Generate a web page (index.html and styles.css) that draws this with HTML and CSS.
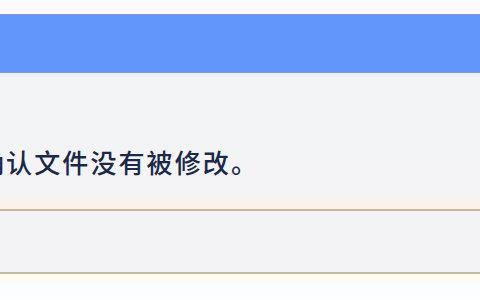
FILE: index.html
```html
<!DOCTYPE html>
<html lang="zh">
<head>
<meta charset="utf-8">
<link rel="stylesheet" href="styles.css">
</head>
<body>
<div class="page">
  <div class="top"></div>
  <div class="bar"></div>
  <div class="content">
    <p class="msg">确认文件没有被修改。</p>
  </div>
  <div class="footer"></div>
  <div class="bottom"></div>
</div>
</body>
</html>
```
FILE: styles.css
```css
html, body {
  margin: 0;
  padding: 0;
  background: #ffffff;
  overflow: hidden;
}
.page {
  width: 480px;
  height: 300px;
  display: flex;
  flex-direction: column;
}
.top {
  height: 14px;
  background: linear-gradient(#fbfdff, #fdf8fc);
}
.bar {
  height: 57px;
  background: #6396fb;
  border-top: 1px solid #8299d6;
  border-bottom: 1px solid #8a9ad6;
}
.content {
  height: 136px;
  background: linear-gradient(#e6f4fb 0, #f3f4f5 4px, #f4f4f6 120px, #fdf1e6 136px);
  display: flex;
  flex-direction: column;
  justify-content: flex-start;
}
.msg {
  margin: 73px 0 0 -22px;
  font-family: "Noto Sans CJK SC", "Liberation Sans", sans-serif;
  font-size: 26px;
  font-weight: 500;
  line-height: 32px;
  color: #1c2848;
  white-space: nowrap;
  letter-spacing: 2.1px;
}
.footer {
  height: 61px;
  background: #f3f3f6;
  border-top: 2px solid #c4b8a2;
  border-bottom: 2px solid #c6b9a0;
}
.bottom {
  flex: 1;
  background: linear-gradient(#fffbe8, #f8fdff 12px, #ffffff 30px);
}
```
